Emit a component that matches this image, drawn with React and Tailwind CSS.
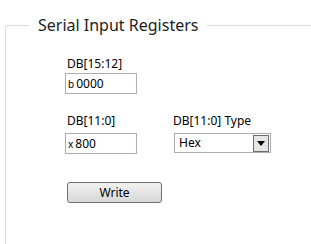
const inputBox = "flex h-[21px] w-[72px] items-center border border-[#abadb3] bg-white pl-[2px]";

const App = () => {
  return (
    <div className="h-[244px] w-[311px] overflow-hidden bg-white pl-[5px] pt-[14px] font-['Noto_Sans',sans-serif] text-black">
      <fieldset className="h-[240px] rounded-tl-[3px] border-l border-t border-[#d5dfe5] pl-[23px]">
        <legend className="px-[9px] text-[16px] leading-[22px] text-[#1e1e1e]">
          Serial Input Registers
        </legend>

        <div className="pl-[36px]">
          <div className="mt-[21px] flex flex-col">
            <span className="pl-[2px] text-[12px] leading-[14px]">DB[15:12]</span>
            <div className={`${inputBox} mt-[2px]`}>
              <span className="text-[10px] leading-none">b</span>
              <span className="ml-[2px] text-[12px] leading-none">0000</span>
            </div>
          </div>

          <div className="mt-[20px] flex gap-[37px]">
            <div className="flex flex-col">
              <span className="pl-[2px] text-[12px] leading-[14px]">DB[11:0]</span>
              <div className={`${inputBox} mt-[5px]`}>
                <span className="text-[10px] leading-none">x</span>
                <span className="ml-[2px] text-[12px] leading-none">800</span>
              </div>
            </div>
            <div className="flex flex-col">
              <span className="-ml-[1px] text-[12px] leading-[14px]">DB[11:0] Type</span>
              <div className="mt-[5px] flex h-[20px] w-[97px] items-center justify-between border border-[#abadb3] bg-white pl-[4px] pr-[1px]">
                <span className="text-[12px] leading-none">Hex</span>
                <div className="flex h-[17px] w-[16px] items-center justify-center border border-[#6d6d6d] bg-[#e6e6e6] p-[1px]">
                  <svg width="8" height="5" viewBox="0 0 8 5">
                    <path d="M0 0h8L4 5z" fill="#000" />
                  </svg>
                </div>
              </div>
            </div>
          </div>

          <button className="mt-[28px] ml-[2px] flex h-[21px] w-[95px] items-center justify-center rounded-[3px] border border-[#707070] bg-gradient-to-b from-[#f2f2f2] to-[#d8d8d8] text-[12px] leading-none">
            Write
          </button>
        </div>
      </fieldset>
    </div>
  );
};

export default App;
